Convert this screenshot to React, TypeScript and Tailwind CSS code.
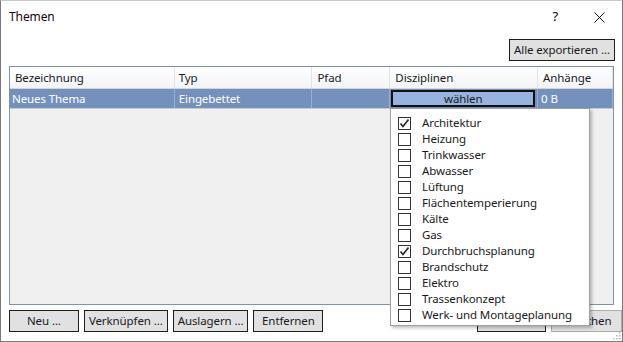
import React from 'react';

const FONT = "font-['Segoe_UI','Noto_Sans',sans-serif]";

const DISCIPLINES: { name: string; checked: boolean }[] = [
  { name: 'Architektur', checked: true },
  { name: 'Heizung', checked: false },
  { name: 'Trinkwasser', checked: false },
  { name: 'Abwasser', checked: false },
  { name: 'Lüftung', checked: false },
  { name: 'Flächentemperierung', checked: false },
  { name: 'Kälte', checked: false },
  { name: 'Gas', checked: false },
  { name: 'Durchbruchsplanung', checked: true },
  { name: 'Brandschutz', checked: false },
  { name: 'Elektro', checked: false },
  { name: 'Trassenkonzept', checked: false },
  { name: 'Werk- und Montageplanung', checked: false },
];

function Btn({ label, className }: { label: string; className?: string }) {
  return (
    <button
      className={`h-[22px] border border-[#1e1e1e] bg-[#e1e1e1] text-[#1a1a1a] leading-none whitespace-nowrap ${className ?? ''}`}
    >
      {label}
    </button>
  );
}

function Check({ checked }: { checked: boolean }) {
  return (
    <span className="w-[13px] h-[13px] border border-[#333] bg-white flex items-center justify-center shrink-0">
      {checked && (
        <svg width="11" height="11" viewBox="0 0 11 11">
          <path d="M1.5 5.5 L4 8.5 L9.5 1.5" fill="none" stroke="#222" strokeWidth="1.6" />
        </svg>
      )}
    </span>
  );
}

export default function App() {
  return (
    <div className={`w-[623px] h-[342px] bg-white border border-[#7a7a7a] border-t-[#c8c8c8] relative ${FONT} text-[11.5px] tracking-[-0.1px] text-black`}>
      {/* title bar */}
      <div className="h-[32px] flex items-center pl-[8px] pr-[17px]">
        <span className="text-[#1a0010] text-[12px]">Themen</span>
        <span className="ml-auto text-[13px] mr-[36px]">?</span>
        <svg width="11" height="11" viewBox="0 0 11 11">
          <path d="M0.5 0.5 L10.5 10.5 M10.5 0.5 L0.5 10.5" stroke="#111" strokeWidth="1" />
        </svg>
      </div>

      <div className="flex justify-end pr-[7px] mt-[6px]">
        <Btn label="Alle exportieren ..." className="w-[106px]" />
      </div>

      {/* grid */}
      <div className="mx-[8px] mt-[5px] h-[239px] border border-[#7f93ad] bg-[#f0f0f0] flex flex-col">
        <div className="h-[22px] flex bg-gradient-to-b from-white to-[#f3f4f6] border-b border-[#d5d5d5] text-[#1a1a1a]">
          <div className="w-[165px] pl-[5px] flex items-center border-r border-[#e3e3e3]">Bezeichnung</div>
          <div className="w-[138px] pl-[4px] flex items-center border-r border-[#e3e3e3]">Typ</div>
          <div className="w-[78px] pl-[5px] flex items-center border-r border-[#e3e3e3]">Pfad</div>
          <div className="w-[148px] pl-[5px] flex items-center border-r border-[#e3e3e3]">Disziplinen</div>
          <div className="w-[75px] pl-[5px] flex items-center border-r border-[#e3e3e3]">Anhänge</div>
        </div>
        <div className="h-[20px] flex bg-[#7491bd] text-white border-b border-[#c9c9c9]">
          <div className="w-[165px] pl-[2px] flex items-center border-r border-[#9aaed0]">Neues Thema</div>
          <div className="w-[138px] pl-[4px] flex items-center border-r border-[#9aaed0]">Eingebettet</div>
          <div className="w-[78px] border-r border-[#9aaed0]" />
          <div className="w-[148px] pl-[1px] pr-[2px] py-[1px] flex items-stretch border-r border-[#9aaed0]">
            <div className="flex-1 border-2 border-[#111] bg-[#98b3e0] text-[#1a1a1a] flex items-center justify-center pt-[1px]">
              wählen
            </div>
          </div>
          <div className="w-[75px] pl-[3px] flex items-center border-r border-[#9aaed0]">0 B</div>
        </div>
      </div>

      {/* bottom buttons */}
      <div className="flex gap-[5px] pl-[8px] mt-[5px]">
        <Btn label="Neu ..." className="w-[70px]" />
        <Btn label="Verknüpfen ..." className="w-[84px]" />
        <Btn label="Auslagern ..." className="w-[76px]" />
        <Btn label="Entfernen" className="w-[70px]" />
        <Btn label="" className="w-[69px] ml-[149px]" />
        <Btn label="Abbrechen" className="w-[71px] border-[#adadad] pr-[8px]" />
      </div>

      {/* resize grip */}
      <svg className="absolute right-[1px] bottom-[1px]" width="10" height="10" viewBox="0 0 10 10">
        {[[8, 8], [5, 8], [2, 8], [8, 5], [5, 5], [8, 2]].map(([x, y]) => (
          <rect key={`${x}-${y}`} x={x} y={y} width="1.5" height="1.5" fill="#b8b8b8" />
        ))}
      </svg>

      {/* dropdown list */}
      <div className="absolute left-[389px] top-[107px] w-[200px] h-[218px] bg-white border border-[#a0a0a0] shadow-[2px_2px_3px_rgba(0,0,0,0.25)] pt-[6px] pl-[7px]">
        {DISCIPLINES.map((d) => (
          <div key={d.name} className="h-[16px] flex items-center gap-[11px] text-[#1a1a1a]">
            <Check checked={d.checked} />
            <span>{d.name}</span>
          </div>
        ))}
      </div>
    </div>
  );
}
